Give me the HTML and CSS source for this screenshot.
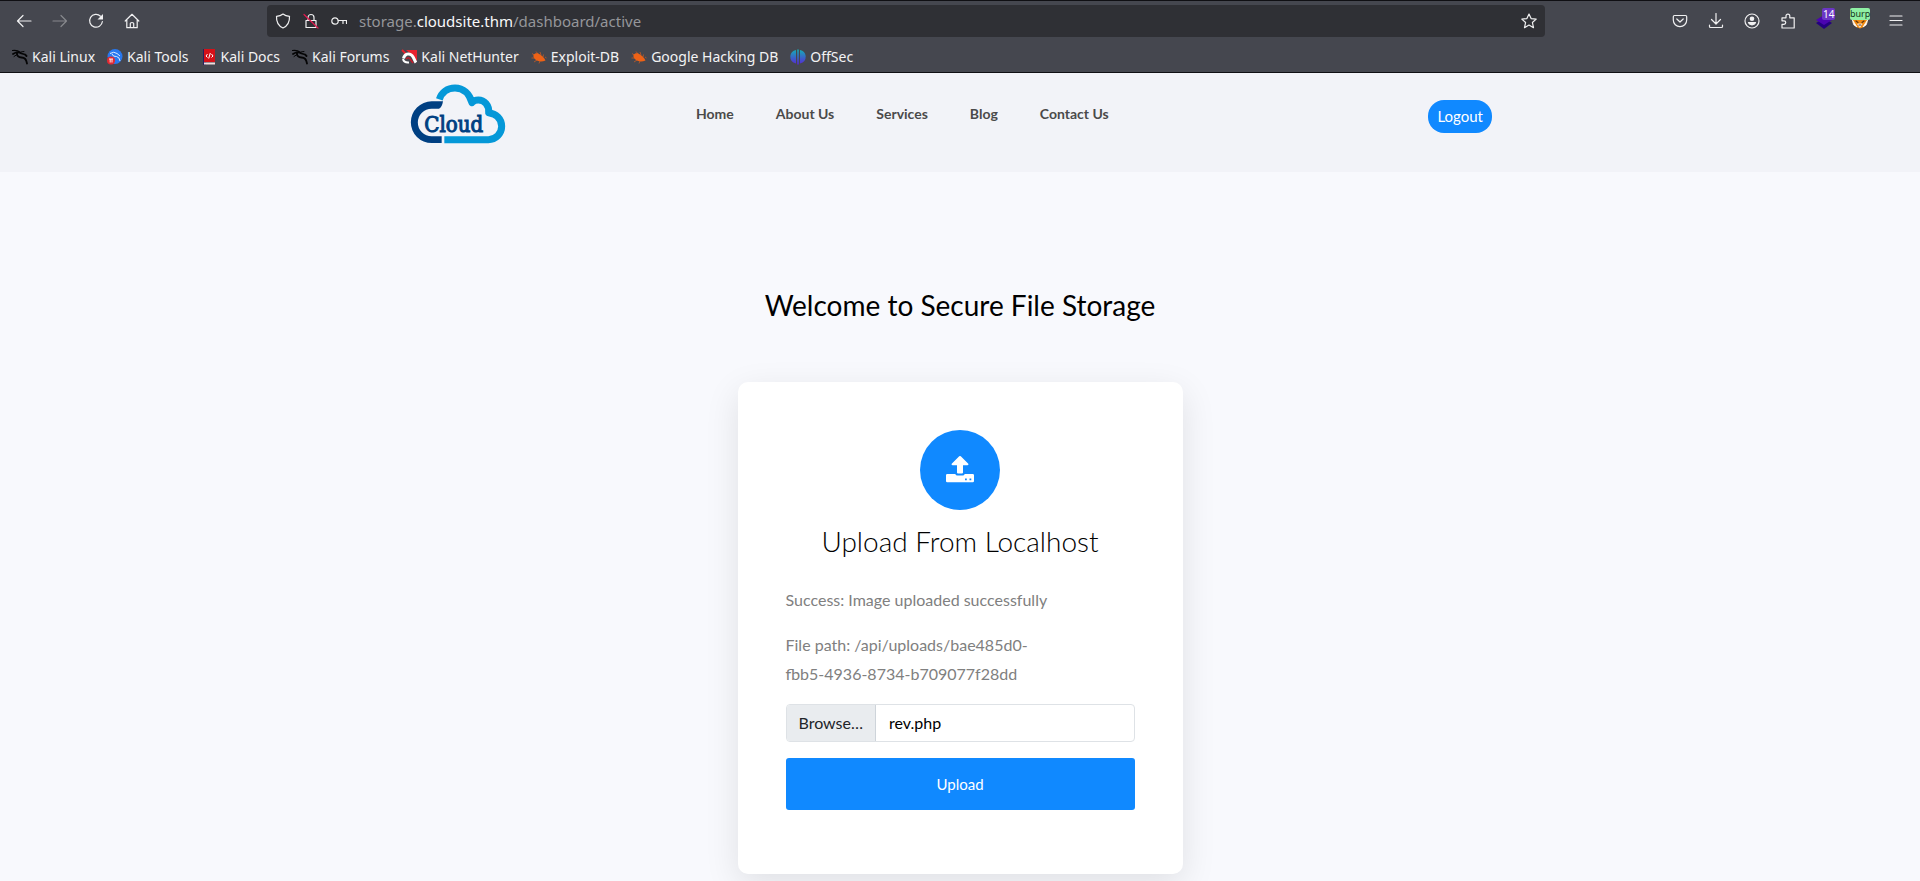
FILE: index.html
```html
<!DOCTYPE html>
<html lang="en">
<head>
<meta charset="utf-8">
<meta name="viewport" content="width=device-width, initial-scale=1">
<title>Secure File Storage</title>
<link rel="stylesheet" href="styles.css">
</head>
<body>
<svg class="defs" aria-hidden="true">
  <defs>
    <linearGradient id="offsec" gradientUnits="userSpaceOnUse" x1="0" y1="0" x2="0" y2="16"><stop offset="0" stop-color="#12b3b5"/><stop offset="1" stop-color="#5a22d8"/></linearGradient>
    <g id="dragon" fill="none" stroke-linecap="round" stroke-linejoin="round">
      <path d="M.5 1.5C3 1 6 1.500 8.500 3.500" stroke-width="1.200"/>
      <path d="M1 5C4 3 7 3 9.500 4.500L13 5.500L14.500 7" stroke-width="1.800"/>
      <path d="M5 3.500C4.500 6.500 6.500 8.500 9.500 8.500C12.500 8.600 14.500 10.500 15 14.500" stroke-width="1.900"/>
      <path d="M2 7.500L5 5.500M9 3L12 2.500" stroke-width="1"/>
    </g>
    <g id="bug" fill="#ee6216" stroke="#ee6216">
      <path d="M2.500 6C4 3.500 7 4 9 5.500C11.500 7 13.500 9 14.500 11.500C11 13 7 12.500 5 11C3 9.500 2 7.500 2.500 6Z" stroke="none"/>
      <path d="M1 4.500L4 6.500M5 2.500L7 5M9 3L10 6M.5 9L4 9M3 13L6 11M8 14.500L9 12M12.500 5.500L12 8M14 8L15.500 9" fill="none" stroke-width=".6"/>
    </g>
  </defs>
</svg>
<div class="browser">
  <div class="toolbar">
    <div class="tools">
      <button class="tool" aria-label="Back"><svg viewBox="0 0 16 16"><path d="M15 8H1.500M7 2.500L1.500 8L7 13.500"/></svg></button>
      <button class="tool dim" aria-label="Forward"><svg viewBox="0 0 16 16"><path d="M1 8H14.500M9 2.500L14.500 8L9 13.500"/></svg></button>
      <button class="tool" aria-label="Reload"><svg viewBox="0 0 16 16"><path d="M12.500 3.200A6.400 6.400 0 1 0 14.400 8.500"/><path class="solid" d="M15 1V6.500H9.500Z"/></svg></button>
      <button class="tool" aria-label="Home"><svg viewBox="0 0 16 16"><path d="M1.200 8L8 1.300L14.800 8M2.800 7V14.700H13.200V7M6.300 14.500V10.500Q6.300 9.500 8 9.500Q9.700 9.500 9.700 10.500V14.500"/></svg></button>
    </div>
    <div class="urlbar">
      <svg viewBox="0 0 16 16"><path d="M8 1C10 2.600 12 3.100 14.500 3.300C14.800 9 12.500 13 8 15C3.500 13 1.200 9 1.500 3.300C4 3.100 6 2.600 8 1Z"/></svg>
      <svg viewBox="0 0 16 16"><path d="M3 7.500H13V14.500H3ZM5 7.500V4.500A3 3 0 0 1 11 4.500V7.500"/><path class="slash" d="M1 1.500L15 15"/></svg>
      <svg viewBox="0 0 16 16"><circle cx="4" cy="8" r="3.200"/><path d="M7.200 7.500H15.500V10.500M12 7.500V10.500"/></svg>
      <div class="url">storage.<b>cloudsite.thm</b>/dashboard/active</div>
      <svg viewBox="0 0 16 16"><path d="M8 1L10.100 5.600L15.200 6.100L11.400 9.500L12.500 14.700L8 12L3.500 14.700L4.600 9.500L.8 6.100L5.900 5.600Z"/></svg>
    </div>
    <div class="tools">
      <button class="tool" aria-label="Save to Pocket"><svg viewBox="0 0 16 16"><path d="M2.500 2.500H13.500Q14.700 2.500 14.700 3.700V7A6.700 6.700 0 0 1 1.300 7V3.700Q1.300 2.500 2.500 2.500ZM4.800 6L8 9L11.200 6"/></svg></button>
      <button class="tool" aria-label="Downloads"><svg viewBox="0 0 16 16"><path d="M8 .5V11M3.500 6.500L8 11L12.500 6.500M1.500 12V13.500Q1.500 14.500 2.500 14.500H13.500Q14.500 14.500 14.500 13.500V12"/></svg></button>
      <button class="tool" aria-label="Account"><svg viewBox="0 0 16 16"><circle cx="8" cy="8" r="7"/><circle class="solid" cx="8" cy="5.800" r="2.300"/><path class="solid" d="M3.800 9H12.200Q11.500 12.200 8 12.400Q4.500 12.200 3.800 9Z"/></svg></button>
      <button class="tool" aria-label="Extensions"><svg viewBox="0 0 16 16"><path d="M2 15V11.300H4A1.700 1.700 0 0 0 4 7.800H2V4.800H6V3A1.900 1.900 0 0 1 9.800 3V4.800H14.200V15Z"/></svg></button>
      <button class="tool" aria-label="Layers extension"><svg viewBox="0 0 16 16"><path d="M0 10L8 5L16 10L8 16Z" fill="#240080" stroke="none"/><path d="M0 7L8 2L16 7L8 12Z" fill="#4b04b0" stroke="none"/></svg><span class="badge violet">14</span></button>
      <button class="tool" aria-label="Proxy extension"><svg viewBox="0 0 16 16"><path d="M.5 5H15.500V9Q14 14 8 15.500Q2 14 .5 9Z" fill="#f28a10" stroke="none"/><path d="M.5 7L5 14L2 12ZM15.500 7L11 14L14 12ZM6 11H10L8 14Z" fill="#fff" stroke="#fff" stroke-width=".7"/><path d="M4 8L6 9.500M12 8L10 9.500M7 12H9" stroke="#5b3513"/></svg><span class="badge green">burp</span></button>
      <button class="tool" aria-label="Menu"><svg viewBox="0 0 16 16"><path d="M2 3H14M2 7.500H14M2 12H14"/></svg></button>
    </div>
  </div>
  <nav class="bookmarks" aria-label="Bookmarks">
    <a href="#"><svg viewBox="0 0 16 16" stroke="#050506"><use href="#dragon"/></svg>Kali Linux</a>
    <a href="#"><svg viewBox="0 0 16 16"><circle cx="8" cy="7.500" r="7.500" fill="#2878ef"/><path d="M3 4.500Q7 2 10 4.500L13 7M5 5Q6 8 9.500 7.500Q12.500 8 13 12" fill="none" stroke="#dbeaff" stroke-width="1"/><circle cx="4" cy="11.500" r="4" fill="#e22932"/><path d="M2 10H6M3.200 10V13.500M5 10V13.500" stroke="#fff" stroke-width=".9"/></svg>Kali Tools</a>
    <a href="#"><svg viewBox="0 0 16 16"><path d="M2 0H5V16H2Z" fill="#29205e"/><path d="M3 0H14V13H3Z" fill="#d41118"/><path d="M3 13.500H14V15.500H3Z" fill="#f1dcdc"/><path d="M6.500 5L5 7L6.500 8.500M10.500 5L12 7L10.500 8.500M9.300 4L7.700 9.500" fill="none" stroke="#fff"/></svg>Kali Docs</a>
    <a href="#"><svg viewBox="0 0 16 16" stroke="#050506"><use href="#dragon"/></svg>Kali Forums</a>
    <a href="#"><svg viewBox="0 0 16 16"><path d="M5 1H16V12L11 6Z" fill="#e8222f"/><path d="M1 1L5 5" stroke="#e8222f" stroke-width="2"/><path d="M2.500 9.500C3.500 5 8 3.500 11 6.500C13 8.500 13.500 11.500 15 13.500" fill="none" stroke="#fff" stroke-width="3"/><path d="M5 10Q8 7.500 9.500 10.500L12 14" fill="none" stroke="#c41a2a" stroke-width="1.500"/><path d="M2 10Q3 14 8 13.500" fill="none" stroke="#fff" stroke-width="2"/></svg>Kali NetHunter</a>
    <a href="#"><svg viewBox="0 0 16 16"><use href="#bug"/></svg>Exploit-DB</a>
    <a href="#"><svg viewBox="0 0 16 16"><use href="#bug"/></svg>Google Hacking DB</a>
    <a href="#"><svg viewBox="0 0 16 16" fill="url(#offsec)"><path d="M7.200 .5H8.800V15.500H7.200ZM6 1V14.500Q0 13 .3 7Q1 2 6 1ZM10 1V14.500Q16 13 15.700 7Q15 2 10 1Z"/></svg>OffSec</a>
  </nav>
</div>
<header class="site-header">
  <div class="container">
    <a class="logo" href="#" aria-label="Cloud">
      <svg viewBox="60 38 288 183">
        <path d="M159 93H125A62 62 0 0 0 125 218H155V198H125A41 41 0 0 1 125 115H147Q156 112 159 93Z" fill="#003f82"/>
        <path d="M163 208H295A40 40 0 0 0 335 168C335 145 318 130 296 127C298 105 283 89 265 89C257 89 250 92 246 97C238 70 220 53 195 53C172 53 155 66 148 87" fill="none" stroke="#0598d8" stroke-width="21" stroke-linejoin="round"/>
        <text x="103" y="185">Cloud</text>
      </svg>
    </a>
    <nav class="menu" aria-label="Main">
      <a href="#">Home</a><a href="#">About Us</a><a href="#">Services</a><a href="#">Blog</a><a href="#">Contact Us</a>
    </nav>
    <button class="logout">Logout</button>
  </div>
</header>
<main>
  <h1>Welcome to Secure File Storage</h1>
  <section class="card">
    <div class="disc">
      <svg viewBox="0 0 28 28"><path d="M13.200 1.300Q14 .5 14.800 1.300L22.300 8.700Q23 10 21.500 10.300H17V17.500Q17 18.500 16 18.500H12Q11 18.500 11 17.500V10.300H6.500Q5 10 5.700 8.700Z"/><path fill-rule="evenodd" d="M1.300 19H9.300Q9.800 20.500 11.500 20.500H16.500Q18.200 20.500 18.700 19H26.700Q28 19 28 20.300V26Q28 27.300 26.700 27.300H1.300Q0 27.300 0 26V20.300Q0 19 1.300 19ZM19 23.500V25.200H20.800V23.500ZM23.500 23.500V25.200H25.300V23.500Z"/></svg>
    </div>
    <h2>Upload From Localhost</h2>
    <p>Success: Image uploaded successfully</p>
    <p>File path: /api/uploads/bae485d0-<wbr><span class="keep">fbb5-4936-8734-b709077f28dd</span></p>
    <form>
      <div class="file">
        <button type="button">Browse…</button>
        <input type="text" value="rev.php" aria-label="Selected file" readonly>
      </div>
      <button class="submit" type="button">Upload</button>
    </form>
  </section>
</main>
</body>
</html>
```
FILE: styles.css
```css
* { box-sizing: border-box; }
body { margin: 0; background: #f8f9fd; color: #000; font: 16px/29px Lato, sans-serif; }
button, input { font: inherit; border: 0; margin: 0; padding: 0; background: none; color: inherit; }
a { color: inherit; text-decoration: none; }
.defs { position: absolute; width: 0; height: 0; }

.browser { background: #45474f; color: #f3f3f4; border-top: 1px solid #0f0f13; border-bottom: 1px solid #0f0f13; font: 14px/20px "Noto Sans", sans-serif; }
.toolbar { display: flex; align-items: center; padding: 4px 6px; }
.tools { display: flex; }
.tool { position: relative; display: flex; justify-content: center; align-items: center; width: 36px; height: 32px; }
.toolbar svg { width: 16px; height: 16px; flex: none; fill: none; stroke: #f0f0f1; stroke-width: 1.2; stroke-linecap: round; stroke-linejoin: round; }
.toolbar .solid { fill: #f0f0f1; stroke: none; }
.toolbar .slash { stroke: #e3194f; }
.dim svg { stroke: #87888d; }
.badge { position: absolute; top: 3px; left: 16px; padding: 0 1px; border-radius: 2px; font-size: 10px; line-height: 12px; }
.violet { background: #6b36c4; color: #fff; }
.green { left: 8px; padding: 0; font-size: 9px; background: #8ff0a4; color: #15351c; }
.urlbar { flex: 1; display: flex; align-items: center; gap: 12px; height: 32px; margin: 0 117px; padding: 0 8px; border-radius: 4px; background: #2f3035; }
.url { flex: 1; color: #95969a; font-size: 15px; }
.url b { font-weight: 400; color: #f8f8f9; }
.bookmarks { display: flex; gap: 12px; padding: 6px 12px 5px; }
.bookmarks a { display: flex; align-items: center; gap: 4px; }
.bookmarks svg { width: 16px; height: 16px; }

.site-header { background: #f2f3f8; }
.container { display: flex; align-items: flex-start; max-width: 1140px; margin: 0 auto; padding: 10px 38px 28px 20px; }
.logo { flex: 0 0 286px; }
.logo svg { display: block; width: 96px; height: 61px; }
.logo text { font: 66px "DejaVu Serif Condensed", "DejaVu Serif", serif; fill: #003f82; stroke: #003f82; stroke-width: 3px; }
.menu { display: flex; gap: 42px; padding-top: 16px; font-size: 14px; font-weight: 700; line-height: 30px; color: #4a4a4a; }
.logout { margin: 17px 0 0 auto; padding: 0 9px 1px; height: 33px; border-radius: 16px; background: #1089ff; color: #fff; font-size: 15px; }

main { display: flex; flex-direction: column; align-items: center; padding: 116px 16px 48px; }
h1 { margin: 0 0 60px; font-size: 28px; line-height: 34px; font-weight: 400; }
.card { width: 100%; max-width: 445px; padding: 48px 48px 64px; border-radius: 10px; background: #fff; box-shadow: 0 10px 34px rgba(0, 0, 0, .1); }
.disc { display: flex; align-items: center; justify-content: center; width: 80px; height: 80px; margin: 0 auto; padding-bottom: 2px; border-radius: 50%; background: #1089ff; }
.disc svg { width: 28px; height: 28px; fill: #fff; }
h2 { margin: 10px 0 23px; font-size: 28px; line-height: 42px; font-weight: 300; text-align: center; }
.card p { margin: 0 0 16px; color: gray; }
.keep { white-space: nowrap; }
.file { display: flex; height: 38px; margin-bottom: 16px; border: 1px solid #dee2e6; border-radius: 4px; overflow: hidden; }
.file button { padding: 0 12px 2px; background: #e9ecef; color: #212529; border-right: 1px solid #ced4da; }
.file input { flex: 1; min-width: 0; padding: 0 13px 2px; }
.submit { width: 100%; height: 52px; border-radius: 3px; background: #1089ff; color: #fff; font-size: 15px; }
```
